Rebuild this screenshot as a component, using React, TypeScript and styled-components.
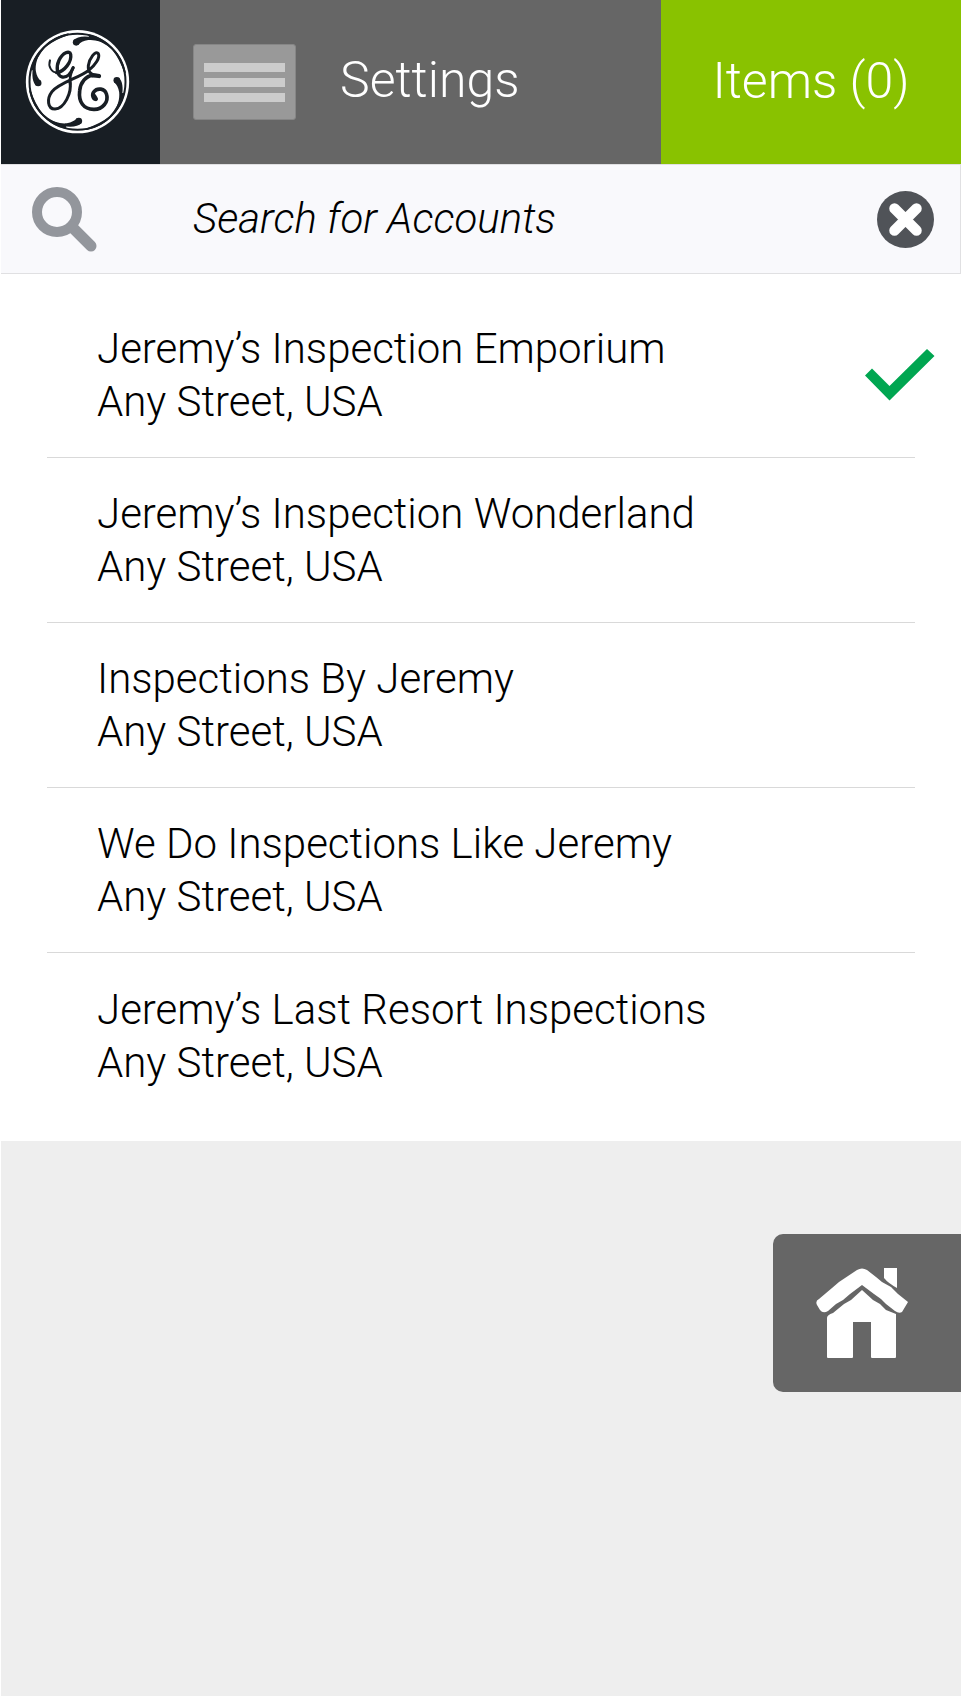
import React from "react";
import styled, { createGlobalStyle } from "styled-components";

const GlobalStyle = createGlobalStyle`
  * { box-sizing: border-box; }
  body { margin: 0; background: #fff; }
  button, input { font: inherit; }
`;

const Page = styled.div`
  padding: 0 0 9px 1px;
  min-height: 100vh;
  display: flex;
  flex-direction: column;
  font-family: Roboto, "Liberation Sans", sans-serif;
  font-weight: 300;
  color: #000;
`;

const Header = styled.header`
  display: flex;
  height: 164px;
  background: #666;
  color: #fff;
  font-size: 50px;
`;

const Brand = styled.a`
  flex: 0 0 159px;
  display: flex;
  align-items: center;
  padding-left: 24px;
  background: #181e24;
`;

const TitleBar = styled.div`
  flex: 1;
  display: flex;
  align-items: center;
  gap: 44px;
  padding-left: 33px;
`;

const MenuButton = styled.button`
  width: 103px;
  height: 76px;
  padding: 0 10px;
  display: flex;
  flex-direction: column;
  justify-content: center;
  gap: 6px;
  border: 1px solid #868686;
  border-radius: 3px;
  background: #999;
`;

const MenuLine = styled.span`
  height: 9px;
  background: #ccc;
`;

const Title = styled.h1`
  margin: 0;
  padding-bottom: 4px;
  font-size: 50px;
  font-weight: 300;
`;

const ItemsButton = styled.button`
  flex: 0 0 300px;
  border: 0;
  padding: 0 0 2px;
  background: #89c200;
  color: inherit;
`;

const SearchBar = styled.form`
  display: flex;
  align-items: center;
  height: 110px;
  padding: 0 26px 0 31px;
  border: solid #e0e0e2;
  border-width: 1px 1px 1px 0;
  background: #f9f9fc;
`;

const SearchLabel = styled.label`
  flex: 0 0 161px;
  display: flex;
`;

const SearchInput = styled.input`
  flex: 1;
  min-width: 0;
  padding: 0 0 2px;
  border: 0;
  outline: 0;
  background: transparent;
  color: #000;
  font-size: 42px;
  font-style: italic;
  &::placeholder { color: #000; opacity: 1; }
`;

const ClearButton = styled.button`
  display: flex;
  padding: 0;
  border: 0;
  background: none;
`;

const Accounts = styled.ul`
  margin: 0;
  padding: 19px 46px 23px;
  list-style: none;
  background: #fff;
`;

const Account = styled.li`
  height: 165px;
  border-bottom: 1px solid #d9d9d9;
  &:last-child { border-bottom: 0; }
`;

const AccountButton = styled.button`
  width: 100%;
  height: 100%;
  padding: 0 0 0 50px;
  display: flex;
  align-items: center;
  border: 0;
  background: none;
  color: #000;
  text-align: left;
  font-size: 42px;
  line-height: 53px;
`;

const AccountText = styled.span`
  flex: 1;
  display: flex;
  flex-direction: column;
`;

const CheckIcon = styled.svg`
  flex: none;
  margin-right: -20px;
`;

const Footer = styled.main`
  flex: 1;
  display: flex;
  justify-content: flex-end;
  align-items: flex-start;
  padding: 93px 0;
  background: #eee;
`;

const HomeButton = styled.button`
  width: 188px;
  height: 158px;
  padding: 0 0 0 43px;
  display: flex;
  align-items: center;
  border: 0;
  border-radius: 10px 0 0 10px;
  background: #666;
`;

const accounts = [
  { name: "Jeremy’s Inspection Emporium", address: "Any Street, USA", selected: true },
  { name: "Jeremy’s Inspection Wonderland", address: "Any Street, USA" },
  { name: "Inspections By Jeremy", address: "Any Street, USA" },
  { name: "We Do Inspections Like Jeremy", address: "Any Street, USA" },
  { name: "Jeremy’s Last Resort Inspections", address: "Any Street, USA" },
];

function Monogram() {
  return (
    <svg width="105" height="105" viewBox="75 90 315 315" aria-hidden="true">
      <circle cx="232.5" cy="245" r="155" fill="#fff" />
      <circle cx="232.5" cy="245" r="144" fill="none" stroke="#181e24" strokeWidth="6" />
      <g fill="#181e24" transform="translate(232.5 245)">
        {[0, 90, 180, 270].map((angle) => (
          <g key={angle} transform={`rotate(${angle})`}>
            <circle cx="-4" cy="-118" r="10" />
            <path d="M-12-124C-2-135 18-138 46-133L60-131C77-124 91-114 102-102C121-82 133-55 141-25L144-26C134-62 121-90 96-107C73-121 52-127 32-125C18-123 8-117 2-110Z" />
            <path d="M34-134Q75-122 104-96Q127-68 141-24L145-28Q135-74 105-102Q76-133 34-142Z" />
          </g>
        ))}
      </g>
      <g fill="none" stroke="#181e24" strokeLinecap="round" strokeLinejoin="round">
        <path strokeWidth="6" d="M150 181C144 198 153 218 173 218" />
        <path strokeWidth="10" d="M170 218C193 215 216 185 212 163C209 150 188 158 177 181C167 203 171 228 187 231C203 233 213 219 219 204" />
        <path strokeWidth="8" d="M220 202C211 220 208 234 211 252" />
        <path strokeWidth="9" d="M210 245C216 278 193 326 165 327C142 327 140 296 156 275C176 249 241 232 266 211C286 195 301 173 295 161C287 149 267 177 265 197C263 218 275 226 298 228" />
        <path strokeWidth="11" d="M278 226C258 227 241 248 239 272C235 306 251 328 281 328C308 329 326 305 320 284C315 264 291 263 282 275C274 285 280 298 288 298" />
        <path strokeWidth="13" d="M278 226Q290 226 297 228M282 288L287 296" />
      </g>
    </svg>
  );
}

export default function App() {
  return (
    <>
      <GlobalStyle />
      <Page>
        <Header>
          <Brand href="#" aria-label="GE home"><Monogram /></Brand>
          <TitleBar>
            <MenuButton type="button" aria-label="Menu">
              <MenuLine /><MenuLine /><MenuLine />
            </MenuButton>
            <Title>Settings</Title>
          </TitleBar>
          <ItemsButton type="button">Items (0)</ItemsButton>
        </Header>
        <SearchBar role="search" onSubmit={(e) => e.preventDefault()}>
          <SearchLabel htmlFor="account-search" aria-label="Search for Accounts">
            <svg width="66" height="66" viewBox="0 0 66 66" fill="none" stroke="#93969c" aria-hidden="true">
              <circle cx="25" cy="26" r="20" strokeWidth="10" />
              <path d="M40 41L59 60" strokeWidth="11" strokeLinecap="round" />
            </svg>
          </SearchLabel>
          <SearchInput id="account-search" type="text" placeholder="Search for Accounts" />
          <ClearButton type="reset" aria-label="Clear search">
            <svg width="57" height="57" viewBox="0 0 57 57" aria-hidden="true">
              <circle cx="28.5" cy="28.5" r="28.5" fill="#505358" />
              <path d="M17.5 17.5L39.5 39.5M39.5 17.5L17.5 39.5" stroke="#fff" strokeWidth="10.5" strokeLinecap="round" />
            </svg>
          </ClearButton>
        </SearchBar>
        <Accounts>
          {accounts.map((account) => (
            <Account key={account.name}>
              <AccountButton type="button" aria-pressed={!!account.selected}>
                <AccountText>
                  <span>{account.name}</span>
                  <span>{account.address}</span>
                </AccountText>
                {account.selected && (
                  <CheckIcon width="70" height="52" viewBox="0 0 70 52" aria-hidden="true">
                    <path fill="#00a651" d="M0 26.5L7 19.5L24.5 37L62 0L69.5 7L24.5 51.5Z" />
                  </CheckIcon>
                )}
              </AccountButton>
            </Account>
          ))}
        </Accounts>
        <Footer>
          <HomeButton type="button" aria-label="Home">
            <svg width="92" height="91" viewBox="0 0 92 91" fill="#fff" aria-hidden="true">
              <path d="M41 2Q46-1 51 2L60 9L66 14L75 19L82 26L92 34L86 44Q83 46 79 43L70 36L65 31L58 26L46 17L34 26L27 32L20 36L12 43Q7 46 4 42L1 37Q-1 33 3 31L16 20L23 14L29 10Z" />
              <path d="M68 0H81V20Q72 15 68 10Z" />
              <path d="M46 22L57 32L64 36L70 42L80 46V89Q80 90 79 90H56Q55 90 55 89V54H37V89Q37 90 36 90H12Q11 90 11 89V50Q11 47 17 45L28 36L35 32Z" />
            </svg>
          </HomeButton>
        </Footer>
      </Page>
    </>
  );
}
